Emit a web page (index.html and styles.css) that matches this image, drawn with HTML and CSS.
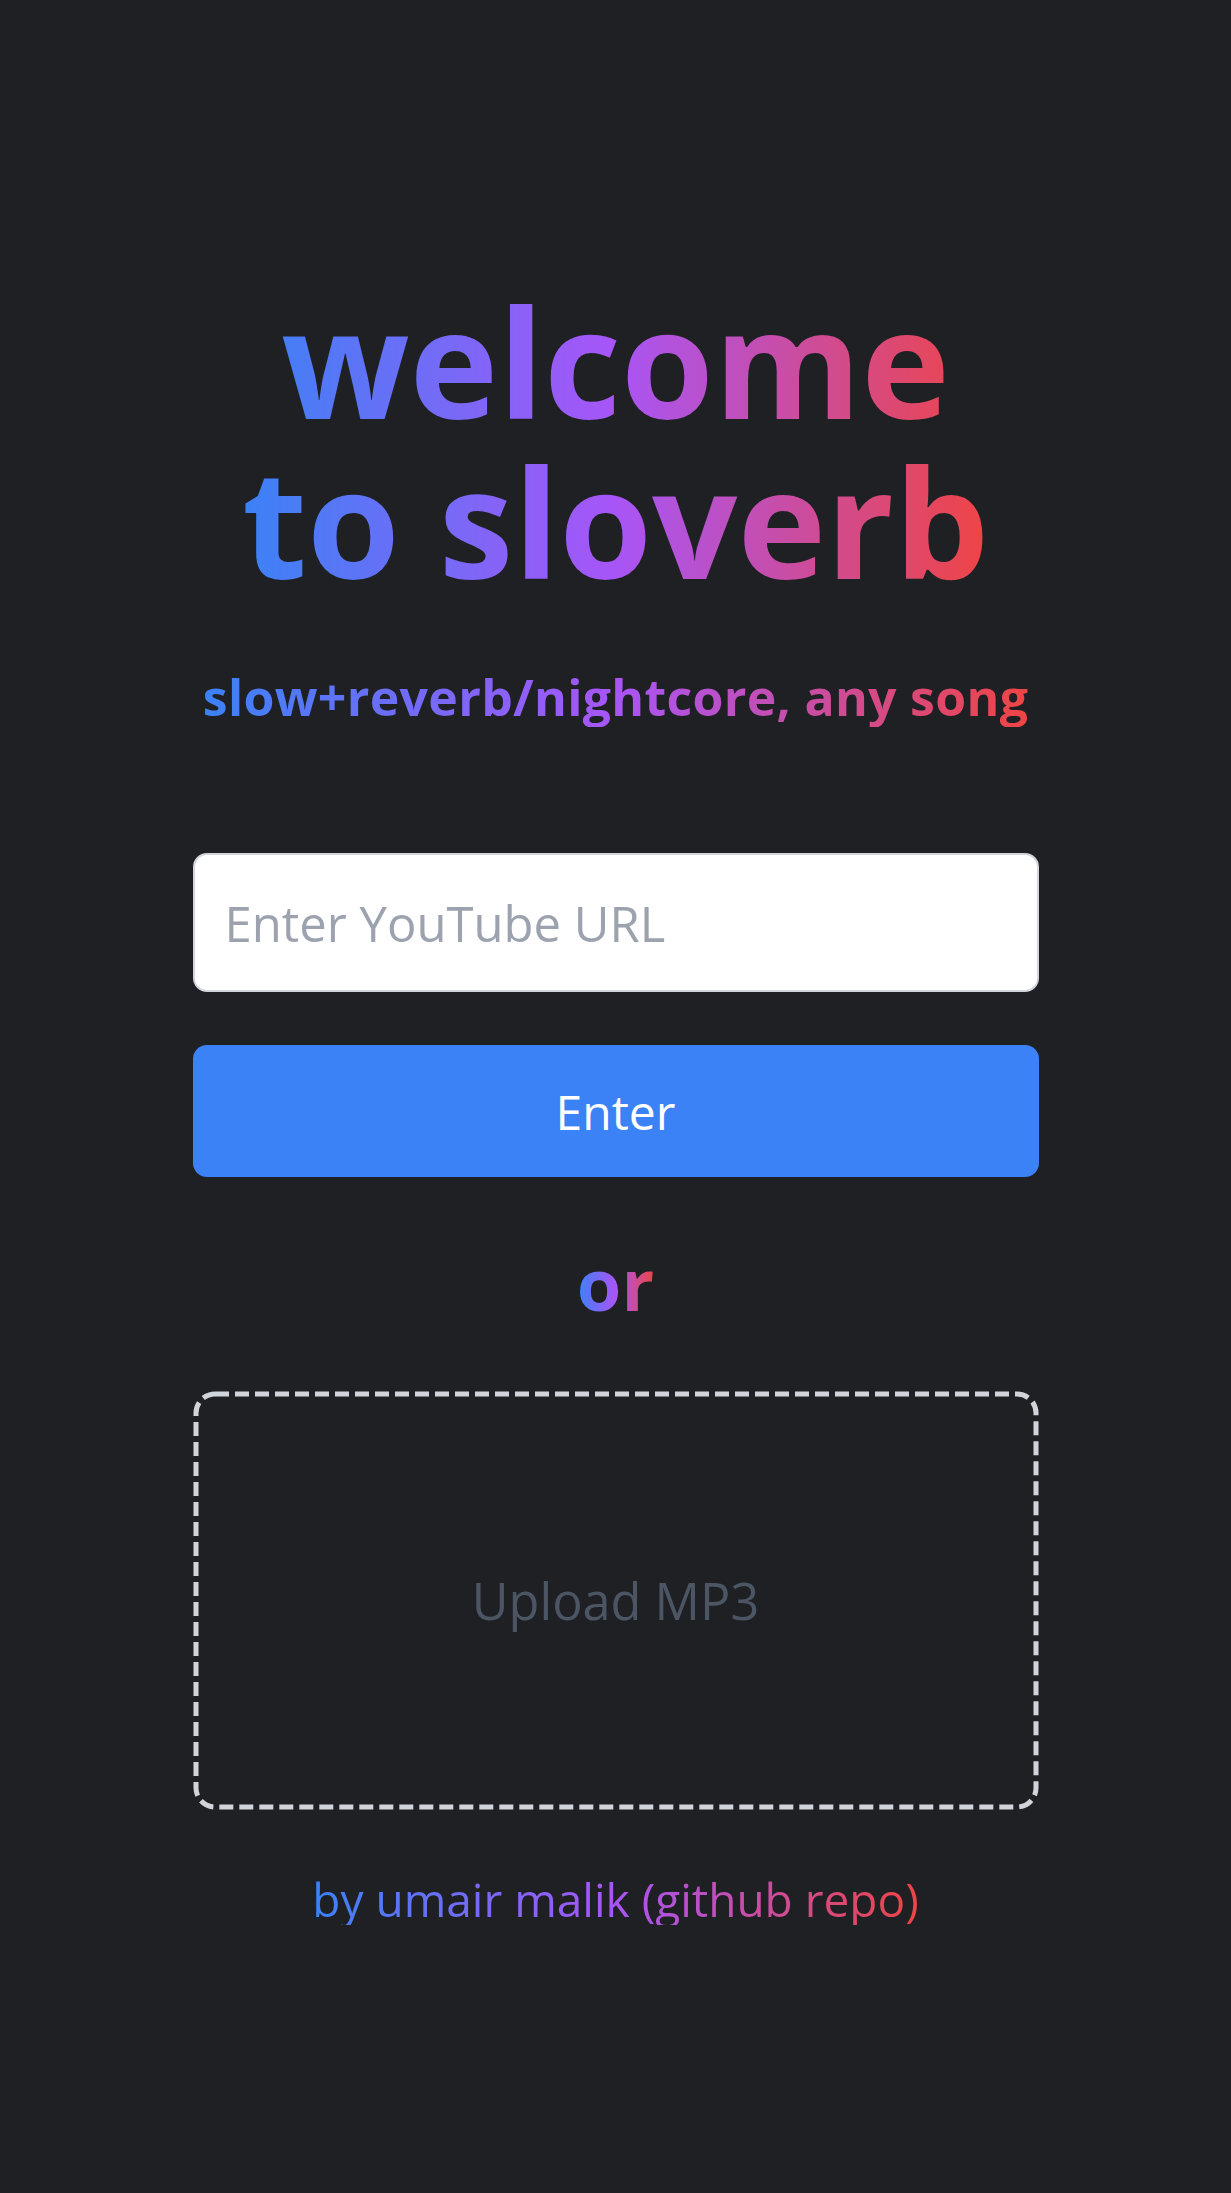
FILE: index.html
```html
<!DOCTYPE html>
<html lang="en">
<head>
<meta charset="utf-8">
<title>sloverb</title>
<link rel="stylesheet" href="styles.css">
</head>
<body>
<main class="page">
  <h1 class="title grad">welcome<br>to sloverb</h1>
  <p class="subtitle grad">slow+reverb/nightcore, any song</p>
  <form class="form">
    <input class="url" type="text" placeholder="Enter YouTube URL">
    <button class="enter" type="button">Enter</button>
  </form>
  <p class="or grad">or</p>
  <div class="upload">
    <svg class="dash" width="846" height="419" viewBox="0 0 846 419" aria-hidden="true">
      <rect x="3" y="3" width="840" height="413" rx="19" ry="19" fill="none" stroke="#d1d5db" stroke-width="5" stroke-dasharray="14 6"/>
    </svg>
    <span>Upload MP3</span>
  </div>
  <p class="footer grad">by umair malik (github repo)</p>
</main>
</body>
</html>
```

FILE: styles.css
```css
html, body {
  margin: 0;
  padding: 0;
  background: #1e2024;
}
body {
  font-family: "Open Sans", "Noto Sans", sans-serif;
  min-height: 2193px;
}
.page {
  width: 846px;
  margin: 0 auto;
  padding-top: 281px;
  display: flex;
  flex-direction: column;
  align-items: center;
}
.grad {
  background-image: linear-gradient(to right, #3b82f6, #a855f7, #ef4444);
  -webkit-background-clip: text;
  background-clip: text;
  color: transparent;
  width: fit-content;
  margin: 0;
  text-align: center;
  white-space: nowrap;
}
.title {
  font-size: 150px;
  line-height: 160px;
  font-weight: 700;
}
.subtitle {
  margin-top: 66px;
  font-size: 50px;
  line-height: 60px;
  font-weight: 700;
  letter-spacing: 0.3px;
}
.form {
  width: 100%;
  margin-top: 126px;
  display: flex;
  flex-direction: column;
  gap: 53px;
}
.url {
  box-sizing: border-box;
  width: 100%;
  height: 139px;
  border: 2px solid #d1d5db;
  border-radius: 14px;
  background: #fff;
  padding: 0 30px;
  font-family: inherit;
  font-size: 49px;
  color: #111827;
  outline: none;
}
.url::placeholder {
  color: #9ca3af;
}
.enter {
  width: 100%;
  height: 132px;
  border: none;
  border-radius: 14px;
  background: #3b82f6;
  color: #fff;
  font-family: inherit;
  font-size: 48px;
  cursor: pointer;
}
.or {
  margin-top: 66px;
  font-size: 72px;
  line-height: 80px;
  font-weight: 700;
}
.upload {
  position: relative;
  box-sizing: border-box;
  margin-top: 68px;
  width: 100%;
  height: 419px;
  border-radius: 20px;
  display: flex;
  align-items: center;
  justify-content: center;
  font-size: 50.5px;
  color: #4b5563;
}
.dash {
  position: absolute;
  left: 0;
  top: 0;
}
.footer {
  margin-top: 63px;
  font-size: 46px;
  line-height: 52px;
  font-weight: 400;
}
```
